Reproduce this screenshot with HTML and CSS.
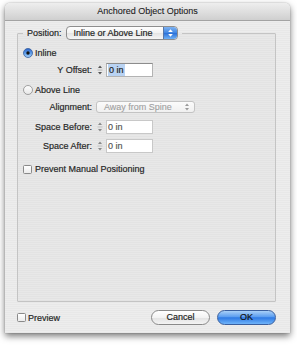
FILE: index.html
```html
<!DOCTYPE html>
<html>
<head>
<meta charset="utf-8">
<link rel="stylesheet" href="styles.css">
</head>
<body>
<div class="window">
  <div class="titlebar">Anchored Object Options</div>
  <div class="content">
    <fieldset class="group">
      <legend class="legend">
        <span class="legend-label">Position:</span>
        <span class="popup popup-main">
          <span class="popup-text">Inline or Above Line</span>
          <span class="popup-arrows">
            <svg width="9" height="10" viewBox="0 0 9 10"><path d="M2.2 4 L4.5 1.3 L6.8 4 Z M2.2 6 L4.5 8.7 L6.8 6 Z" fill="#fff"/></svg>
          </span>
        </span>
      </legend>
      <div class="rows">
        <div class="row radio-row r-inline">
          <svg class="radio" width="10" height="10" viewBox="0 0 10 10">
            <defs>
              <linearGradient id="rb" x1="0" y1="0" x2="0" y2="1">
                <stop offset="0" stop-color="#2a63c9"/>
                <stop offset="0.5" stop-color="#5c9be8"/>
                <stop offset="1" stop-color="#a6d1fb"/>
              </linearGradient>
            </defs>
            <circle cx="5" cy="5" r="4.5" fill="url(#rb)" stroke="#365e9c" stroke-width="0.8"/>
            <circle cx="5" cy="5" r="1.7" fill="#111"/>
          </svg>
          <span class="opt-label">Inline</span>
        </div>
        <div class="row field-row r-yoffset">
          <span class="label">Y Offset:</span>
          <svg class="stepper" width="8" height="14" viewBox="0 0 8 14"><path d="M2 5 L4 2.5 L6 5 Z M2 9 L4 11.5 L6 9 Z" fill="#555"/><line x1="1.5" y1="7" x2="6.5" y2="7" stroke="#999" stroke-width="0.6"/></svg>
          <span class="field"><span class="sel">0 in</span></span>
        </div>
        <div class="row radio-row r-above">
          <svg class="radio" width="10" height="10" viewBox="0 0 10 10">
            <defs>
              <linearGradient id="rw" x1="0" y1="0" x2="0" y2="1">
                <stop offset="0" stop-color="#ffffff"/>
                <stop offset="1" stop-color="#e6e6e6"/>
              </linearGradient>
            </defs>
            <circle cx="5" cy="5" r="4.5" fill="url(#rw)" stroke="#8a8a8a" stroke-width="0.8"/>
          </svg>
          <span class="opt-label">Above Line</span>
        </div>
        <div class="row field-row r-align">
          <span class="label">Alignment:</span>
          <span class="popup popup-dis">
            <span class="popup-text">Away from Spine</span>
            <svg class="dis-arrows" width="8" height="10" viewBox="0 0 8 10"><path d="M2 4 L4 1.5 L6 4 Z M2 6 L4 8.5 L6 6 Z" fill="#9a9a9a"/></svg>
          </span>
        </div>
        <div class="row field-row r-before">
          <span class="label">Space Before:</span>
          <svg class="stepper" width="8" height="14" viewBox="0 0 8 14"><path d="M2 5 L4 2.5 L6 5 Z M2 9 L4 11.5 L6 9 Z" fill="#8a8a8a"/><line x1="1.5" y1="7" x2="6.5" y2="7" stroke="#aaa" stroke-width="0.6"/></svg>
          <span class="field dis">0 in</span>
        </div>
        <div class="row field-row r-after">
          <span class="label">Space After:</span>
          <svg class="stepper" width="8" height="14" viewBox="0 0 8 14"><path d="M2 5 L4 2.5 L6 5 Z M2 9 L4 11.5 L6 9 Z" fill="#8a8a8a"/><line x1="1.5" y1="7" x2="6.5" y2="7" stroke="#aaa" stroke-width="0.6"/></svg>
          <span class="field dis">0 in</span>
        </div>
        <div class="row radio-row r-prevent">
          <span class="checkbox"></span>
          <span class="opt-label">Prevent Manual Positioning</span>
        </div>
      </div>
    </fieldset>
    <div class="footer">
      <div class="preview">
        <span class="checkbox"></span>
        <span class="opt-label">Preview</span>
      </div>
      <div class="buttons">
        <span class="btn btn-cancel">Cancel</span>
        <span class="btn btn-ok">OK</span>
      </div>
    </div>
  </div>
</div>
</body>
</html>
```

FILE: styles.css
```css
* { box-sizing: border-box; }
html, body {
  margin: 0;
  padding: 0;
  background: #ffffff;
}
body {
  width: 297px;
  height: 348px;
  overflow: hidden;
  font-family: "Liberation Sans", Arial, sans-serif;
  font-size: 9px;
  color: #262626;
  -webkit-text-stroke: 0.18px currentColor;
}
.window {
  margin: 3px 0 0 5px;
  width: 285px;
  height: 330px;
  border-radius: 5px 5px 0 0;
  background: repeating-linear-gradient(180deg, #ededed 0px, #ededed 1px, #e8e8e8 1px, #e8e8e8 2px);
  box-shadow: 0 3px 7px rgba(0,0,0,0.55), 0 0 1px rgba(0,0,0,0.5);
  display: flex;
  flex-direction: column;
}
.titlebar {
  height: 18px;
  line-height: 17px;
  text-align: center;
  color: #222;
  font-size: 9px;
  -webkit-text-stroke: 0.1px currentColor;
  border-radius: 5px 5px 0 0;
  background: linear-gradient(180deg, #eeeeee 0%, #dcdcdc 60%, #cfcfcf 100%);
  border-bottom: 1px solid #a3a3a3;
}
.content {
  padding: 5px 0 0 12px;
  display: flex;
  flex-direction: column;
}
.group {
  margin: 0;
  padding: 0;
  width: 259px;
  height: 276px;
  border: 1px solid #c4c4c4;
  border-radius: 1px;
  background: rgba(0,0,0,0.02);
  min-width: 0;
}
.legend {
  margin-left: 5px;
  padding: 0 4px;
  display: flex;
  align-items: center;
  gap: 4px;
  height: 14px;
}
.legend-label {
  line-height: 14px;
}
.popup {
  display: inline-flex;
  align-items: center;
  border-radius: 4px;
  position: relative;
}
.popup-main {
  width: 112px;
  height: 14px;
  border: 1px solid #8e8e8e;
  background: linear-gradient(180deg, #ffffff 0%, #f2f2f2 50%, #e4e4e4 51%, #f6f6f6 100%);
  padding-left: 7px;
  justify-content: space-between;
  overflow: hidden;
}
.popup-text {
  line-height: 12px;
}
.popup-arrows {
  width: 14px;
  height: 12px;
  background: linear-gradient(180deg, #7fb3f2 0%, #3d84e2 50%, #2a6fd6 51%, #6fb1f6 100%);
  display: flex;
  align-items: center;
  justify-content: center;
  border-left: 1px solid #5676a8;
  border-radius: 0 3px 3px 0;
}
.rows {
  display: flex;
  flex-direction: column;
  padding-left: 5px;
}
.row {
  display: flex;
  align-items: center;
  height: 14px;
}
.r-inline { margin-top: 6px; }
.r-yoffset { margin-top: 3px; }
.r-above { margin-top: 6px; }
.r-align { margin-top: 3px; }
.r-before { margin-top: 6px; }
.r-after { margin-top: 5px; }
.r-prevent { margin-top: 9px; }
.radio {
  display: block;
  flex: none;
}
.opt-label {
  margin-left: 2px;
  line-height: 14px;
}
.label {
  width: 69px;
  text-align: right;
  margin-right: 4px;
  line-height: 14px;
}
.stepper {
  display: block;
  flex: none;
}
.field {
  margin-left: 2px;
  width: 47px;
  height: 14px;
  background: #fff;
  border: 1px solid #b3b3b3;
  border-top-color: #8c8c8c;
  padding-left: 1px;
  line-height: 12px;
  color: #222;
}
.field.dis {
  color: #555;
  border-color: #c8c8c8;
}
.sel {
  background: #b9d3f3;
  padding: 0 1px;
  display: inline-block;
  line-height: 12px;
}
.popup-dis {
  width: 99px;
  height: 12px;
  border: 1px solid #c3c3c3;
  background: linear-gradient(180deg, #fbfbfb 0%, #f0f0f0 100%);
  color: #a0a0a0;
  padding-left: 7px;
  justify-content: space-between;
  padding-right: 3px;
  border-radius: 3px;
  -webkit-text-stroke: 0.1px currentColor;
}
.popup-dis .popup-text {
  line-height: 10px;
}
.dis-arrows {
  display: block;
}
.checkbox {
  display: block;
  width: 9px;
  height: 9px;
  flex: none;
  border: 1px solid #8a8a8a;
  border-radius: 1.5px;
  background: linear-gradient(180deg, #ffffff 0%, #ececec 100%);
}
.r-prevent .opt-label { margin-left: 3px; }
.footer {
  margin-top: 8px;
  width: 259px;
  height: 15px;
  display: flex;
  align-items: center;
  justify-content: space-between;
}
.preview {
  display: flex;
  align-items: center;
}
.preview .opt-label { margin-left: 2px; }
.buttons {
  display: flex;
  gap: 7px;
}
.btn {
  display: block;
  width: 59px;
  height: 15px;
  border-radius: 8px;
  text-align: center;
  line-height: 13px;
}
.btn-cancel {
  border: 1px solid #8a8a8a;
  background: linear-gradient(180deg, #ffffff 0%, #f3f3f3 50%, #e2e2e2 51%, #f4f4f4 100%);
  color: #222;
}
.btn-ok {
  border: 1px solid #3a5f9e;
  background: linear-gradient(180deg, #a9d0f7 0%, #5b9df0 45%, #2f7ae4 52%, #6fb4fa 100%);
  color: #111;
}
```
